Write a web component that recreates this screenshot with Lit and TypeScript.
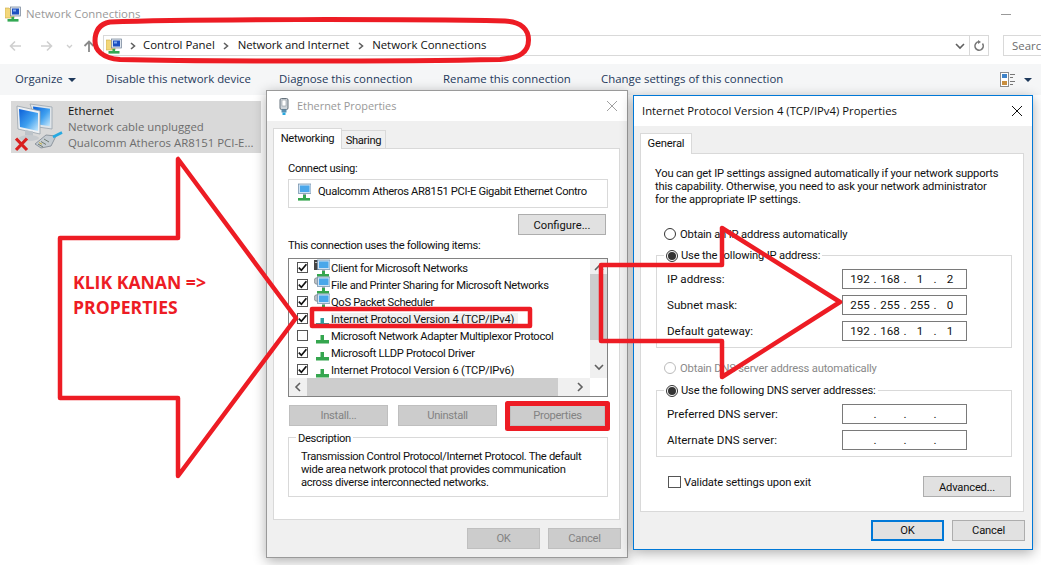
import { LitElement, html, css, svg } from "lit";
import { customElement } from "lit/decorators.js";

const netIcon = () => html`<svg class="ic16" viewBox="0 0 16 16" width="16" height="16">
  <path d="M0 2h4l1 1h4v9H0z" fill="#f3d77a" stroke="#c9a94a" stroke-width=".6"/>
  <rect x="5.5" y="1" width="10" height="9" fill="#dfe6ee" stroke="#6f7f93" stroke-width=".7"/>
  <rect x="7" y="2.5" width="7" height="6" fill="#1c4fc0"/>
  <rect x="8" y="3.5" width="3" height="2" fill="#7fa8ef"/>
  <rect x="6.5" y="11" width="2.6" height="2" fill="#33a853"/>
  <rect x="2.5" y="13" width="11" height="2.6" fill="#33a853"/>
</svg>`;

const pcIcon = (extra: string) => html`<svg class="ic16" viewBox="0 0 16 18" width="16" height="18">
  ${extra === "srv" ? svg`<rect x="0" y="1" width="5" height="10" fill="#444"/><rect x="1" y="3" width="3" height="1" fill="#bbb"/>` : ""}
  ${extra === "gear" ? svg`<circle cx="3.5" cy="5" r="3.4" fill="#b9bec3" stroke="#80868b" stroke-width=".7"/>` : ""}
  <rect x="3.5" y="1" width="12.5" height="9.5" fill="#cfe3f5" stroke="#6d8aa5" stroke-width=".7"/>
  <rect x="5" y="2.5" width="9.5" height="6.5" fill="#4aa7ea"/>
  <rect x="8" y="10.5" width="3" height="2" fill="#9aa5ad"/>
  <rect x="8" y="12" width="3" height="3" fill="#35a64f"/>
  <rect x="3" y="15" width="12" height="2.6" fill="#35a64f"/>
</svg>`;

const protoIcon = (c = "#35a64f") => html`<svg class="ic16" viewBox="0 0 16 18" width="16" height="18">
  <rect x="6.5" y="8" width="3.5" height="5" fill="${c}"/>
  <rect x="2" y="13" width="13" height="3.5" fill="${c}"/>
</svg>`;

const plugIcon = () => html`<svg viewBox="0 0 10 17" width="10" height="17">
  <rect x="1" y="0.5" width="8" height="11" rx="1.5" fill="#cfd5da" stroke="#66727c"/>
  <rect x="3" y="2" width="4" height="6" fill="#fff" stroke="#8a949c" stroke-width=".6"/>
  <rect x="2.5" y="11.5" width="5" height="3" fill="#5a8fb0"/>
  <rect x="3.5" y="14.5" width="3" height="2.5" fill="#27a9e1"/>
</svg>`;

const ethIcon = () => html`<svg class="bigic" viewBox="0 0 48 50" width="48" height="50">
  <defs>
    <linearGradient id="scr" x1="0" y1="0" x2="1" y2="1"><stop offset="0" stop-color="#0b5fd8"/><stop offset=".55" stop-color="#3fa0ef"/><stop offset="1" stop-color="#c9e9fc"/></linearGradient>
  </defs>
  <path d="M15 1l22 3v22l-14-2z" fill="#dfe5ea" stroke="#9aa4ae" stroke-width=".8"/>
  <path d="M18 3.500l17 2.300v17.500L20 21z" fill="url(#scr)"/>
  <path d="M2 3l23 5v23L3 26z" fill="#eef1f4" stroke="#98a2ab" stroke-width=".8"/>
  <path d="M4 6l19 4v18L5 24z" fill="url(#scr)"/>
  <path d="M10 27l8 1.500v5l-8-1.500z" fill="#bcc3c9"/>
  <ellipse cx="14" cy="35" rx="10" ry="3" fill="#c6cace"/>
  <path d="M20 41l11-9 10 1-5 10-10 2z" fill="#c4cbd1" stroke="#7d8790" stroke-width=".8"/>
  <path d="M23 41l5 3M26 38.500l5 3M29 36l5 3" stroke="#6f7b70" stroke-width="1"/>
  <path d="M24 39.500l3 1.800" stroke="#c9b23c" stroke-width="1"/>
  <path d="M38 34l9-4.500" stroke="#27a9e1" stroke-width="2.600"/>
  <path d="M1 35.500l11 11.500M12 35.500L1 47" stroke="#d9201f" stroke-width="3.200"/>
</svg>`;

const chk = (on: boolean) => html`<span class="cb">${on
  ? html`<svg viewBox="0 0 11 11" width="11" height="11"><path d="M1.800 5.600l2.600 2.700 5-6" fill="none" stroke="#111" stroke-width="1.700"/></svg>`
  : ""}</span>`;

const tri = (d: string) => html`<svg viewBox="0 0 10 10" width="10" height="10"><path d="${d}" fill="none" stroke="#606060" stroke-width="1.600"/></svg>`;

const ip = (parts: string[]) => html`<div class="ip">
  ${parts.map((p, i) => html`<span class="oct">${p}</span>${i < 3 ? html`<span class="dot">.</span>` : ""}`)}
</div>`;

const closeX = (c: string) => html`<svg viewBox="0 0 12 12" width="12" height="12"><path d="M1 1l10 10M11 1L1 11" stroke="${c}" stroke-width="1"/></svg>`;

@customElement("app-root")
export class AppRoot extends LitElement {
  static styles = css`
    :host { display: block; position: relative; width: 1041px; height: 565px; overflow: hidden; background: #fff;
      font-family: "Open Sans", "Noto Sans", sans-serif; font-size: 11.4px; color: #111; }
    * { box-sizing: border-box; }
    svg { display: block; flex: none; }
    .up { padding-bottom: 2px; }

    .explorer { display: flex; flex-direction: column; width: 1041px; height: 565px; }
    .titlebar { height: 28px; display: flex; align-items: center; gap: 5px; padding: 0 30px 0 5px; color: #999; }
    .min { margin-left: auto; width: 10px; height: 1px; background: #999; }
    .navrow { margin-top: 7px; height: 21px; display: flex; }
    .navbtns { width: 103px; flex: none; }
    .addr { width: 867px; flex: none; border: 1px solid #d9d9d9; display: flex; align-items: center; padding-left: 2px; }
    .chev { width: 23px; flex: none; display: flex; justify-content: center; }
    .chev.first { width: 21px; }
    .nai { letter-spacing: -.15px; }
    .ddn { margin-left: auto; margin-right: 4px; }
    .refresh { width: 19px; flex: none; border: 1px solid #d9d9d9; border-left: 0; display: flex; align-items: center; justify-content: center; }
    .search { margin-left: 14px; width: 60px; flex: none; border: 1px solid #d9d9d9; color: #6d6d6d; padding: 2px 0 0 8px; white-space: nowrap; overflow: hidden; }
    .toolbar { margin-top: 8px; height: 31px; background: #f5f6f7; display: flex; align-items: center; color: #1e395b; }
    .toolbar span { white-space: nowrap; }
    .tool-org { margin-left: 15px; width: 91px; display: flex; gap: 5px; align-items: center; flex: none; }
    .t-dis { width: 173px; flex: none; }
    .t-dia { width: 164px; flex: none; }
    .t-ren { width: 158px; flex: none; }
    .t-chg { flex: none; }
    .views { margin-left: auto; margin-right: 9px; display: flex; align-items: center; gap: 8px; }
    .caret { width: 0; height: 0; border-left: 4px solid transparent; border-right: 4px solid transparent; border-top: 4px solid #1e395b; }
    .tile { margin: 6px 0 0 11px; width: 250px; height: 52px; background: #d9d9d9; display: flex; color: #6d6d6d; }
    .bigic { margin: 2px 0 0 4px; }
    .tile-txt { margin-left: 5px; padding-top: 2px; line-height: 16px; white-space: nowrap; }
    .tile-txt b { font-weight: 400; color: #111; display: block; }
    .tile-txt span { display: block; }

    .win { position: absolute; display: flex; flex-direction: column; background: #f0f0f0; box-shadow: 0 3px 12px rgba(0,0,0,.32); }
    .w1 { left: 266px; top: 90px; width: 362px; height: 468px; border: 1px solid #9a9a9a; }
    .w2 { left: 633px; top: 95px; width: 400px; height: 455px; border: 1px solid #0078d7; }
    .wt { height: 30px; flex: none; background: #fff; display: flex; align-items: center; font-family: "Open Sans", sans-serif; }
    .w1 .wt { padding: 0 9px 0 12px; color: #999; gap: 8px; font-size: 10.9px; }
    .w2 .wt { padding: 0 9px 0 8px; font-size: 11.3px; }
    .wx { margin-left: auto; }
    .w1, .w2 { font-family: Roboto, sans-serif; font-size: 11.2px; }
    .w1 { letter-spacing: -.34px; }
    .w2 { letter-spacing: -.17px; }
    .wt { letter-spacing: 0; }
    .tabs { display: flex; align-items: flex-end; padding: 7px 0 0 6px; height: 27px; flex: none; }
    .tab { height: 18px; border: 1px solid #d9d9d9; border-bottom: 0; display: flex; align-items: center; justify-content: center; }
    .tab.on { height: 21px; background: #fff; margin-bottom: -1px; position: relative; z-index: 1; padding-bottom: 1px; }
    .tn { width: 69px; }
    .ts { width: 45px; margin-left: -1px; padding-top: 2px; }
    .tg { width: 52px; }
    .panel { margin-left: 6px; background: #fff; border: 1px solid #d9d9d9; display: flex; flex-direction: column; flex: none; }
    .w1 .panel { width: 347px; height: 372px; padding: 12px 11px 0 14px; }
    .w2 .panel { width: 384px; height: 359px; padding: 13px 0 0 14px; }
    .lbl { height: 14px; line-height: 16px; white-space: nowrap; }
    .adapter { margin-top: 4px; height: 29px; width: 320px; border: 1px solid #d9d9d9; display: flex; align-items: center; padding: 0 0 3px 6px; gap: 7px; white-space: nowrap; overflow: hidden; }
    .btn { height: 21px; display: flex; align-items: center; justify-content: center; background: #e1e1e1; border: 1px solid #adadad; flex: none; letter-spacing: -.2px; }
    .btn.off { background: #ccc; border-color: #bfbfbf; color: #838383; letter-spacing: -.3px; }
    .cfg { margin: 6px 0 0 230px; width: 88px; letter-spacing: 0; padding-top: 2px; }
    .list { margin-top: 6px; width: 320px; height: 139px; border: 1px solid #828282; display: grid; grid-template-columns: 301px 17px; grid-template-rows: 119px 18px; }
    .rows { overflow: hidden; }
    .row { height: 17px; display: flex; align-items: center; padding-left: 8px; white-space: nowrap; }
    .row .cb { margin-right: 6px; }
    .row .name { margin-left: 1px; height: 13px; line-height: 13px; margin-top: 1px; }
    .row .name.wide { letter-spacing: -.19px; }
    .row.sel .name { background: #f0f0f0; padding-right: 4px; }
    .cb { width: 11px; height: 11px; border: 1px solid #555; flex: none; display: block; position: relative; }
    .cb svg { margin: -1px 0 0 -1px; }
    .vbar { background: #f0f0f0; display: flex; flex-direction: column; align-items: center; padding-top: 4px; }
    .vthumb { margin-top: 1px; width: 17px; height: 66px; background: #cdcdcd; }
    .varr2 { margin-top: 22px; }
    .hbar { background: #f0f0f0; display: flex; align-items: center; padding-left: 4px; }
    .hthumb { margin-left: 4px; width: 251px; height: 18px; background: #cdcdcd; }
    .harr2 { margin-left: 17px; }
    .btns { margin-top: 8px; display: flex; gap: 10px; padding-left: 1px; }
    .b99 { width: 99px; }
    .bprop { width: 95px; margin-left: 3px; }
    .grp { position: relative; border: 1px solid #d9d9d9; }
    .desc { margin-top: 11px; width: 320px; height: 60px; padding: 12px 0 0 12px; line-height: 13px; white-space: nowrap; }
    .legend { position: absolute; left: 7px; top: -7px; background: #fff; padding: 0 2px; line-height: 14px; white-space: nowrap; display: flex; align-items: center; gap: 3px; }
    .desc .legend { top: -6px; }
    .foot { display: flex; justify-content: flex-end; gap: 8px; }
    .w1 .foot { padding: 8px 6px 0 0; }
    .w2 .foot { padding: 8px 7px 0 0; }
    .b73 { width: 73px; }
    .prim { border: 2px solid #0078d7; }
    .para { line-height: 13px; white-space: nowrap; }
    .radio { width: 12px; height: 12px; border-radius: 50%; border: 1px solid #333; background: #fff; flex: none; display: flex; align-items: center; justify-content: center; }
    .radio.on::after { content: ""; width: 8px; height: 8px; background: #333; border-radius: 50%; }
    .radio.dim { border-color: #bbb; }
    .rrow { height: 16px; display: flex; align-items: center; gap: 4px; margin-left: 9px; white-space: nowrap; }
    .rrow.dim { color: #8a8a8a; }
    .r1 { margin-top: 20px; }
    .r2 { margin-top: 12px; }
    .g1, .g2 { margin-left: 1px; width: 356px; padding: 13px 0 0 10px; display: flex; flex-direction: column; gap: 6px; }
    .g1 { margin-top: 13px; height: 93px; }
    .g2 { margin-top: 14px; height: 67px; }
    .frow { display: flex; align-items: center; height: 20px; white-space: nowrap; }
    .flabel { width: 175px; flex: none; font-size: 11.6px; letter-spacing: 0; }
    .ip { width: 125px; height: 20px; border: 1px solid #7a7a7a; display: flex; align-items: center; padding-left: 3px; flex: none; letter-spacing: 0; font-size: 11.6px; }
    .oct { width: 28px; text-align: center; flex: none; }
    .dot { width: 2px; display: flex; justify-content: center; flex: none; }
    .bottom { margin: 19px 0 0 13px; width: 343px; display: flex; justify-content: space-between; align-items: flex-start; }
    .val { display: flex; align-items: center; gap: 3px; height: 12px; white-space: nowrap; }
    .val .cb { width: 13px; height: 12px; }
    .adv { width: 88px; padding-top: 2px; }

    .marks { position: absolute; left: 0; top: 0; }
    .note { position: absolute; left: 73px; top: 270px; color: #ed1c24; font-family: "Open Sans", sans-serif; font-weight: 700; font-size: 17.6px; line-height: 25px; white-space: nowrap; }
  `;

  render() {
    const items: [boolean, unknown, string, boolean][] = [
      [true, pcIcon("srv"), "Client for Microsoft Networks", false],
      [true, pcIcon("gear"), "File and Printer Sharing for Microsoft Networks", false],
      [true, pcIcon("gear"), "QoS Packet Scheduler", false],
      [true, protoIcon("#2e9fa0"), "Internet Protocol Version 4 (TCP/IPv4)", true],
      [false, protoIcon(), "Microsoft Network Adapter Multiplexor Protocol", false],
      [true, protoIcon(), "Microsoft LLDP Protocol Driver", false],
      [true, protoIcon(), "Internet Protocol Version 6 (TCP/IPv6)", false],
    ];
    return html`
      <div class="explorer">
        <div class="titlebar">${netIcon()}<span class="up">Network Connections</span><span class="min"></span></div>
        <div class="navrow">
          <div class="navbtns">
            <svg viewBox="0 0 103 21" width="103" height="21">
              <path d="M21 11H11M15 6.500L10.500 11l4.500 4.500" fill="none" stroke="#cfcfcf" stroke-width="1.600"/>
              <path d="M41 11h10M47 6.500l4.500 4.500-4.500 4.500" fill="none" stroke="#cfcfcf" stroke-width="1.600"/>
              <path d="M67 10l2.500 2.500L72 10" fill="none" stroke="#cfcfcf" stroke-width="1.300"/>
              <path d="M89 17V6.500M84.500 11L89 6.500l4.500 4.500" fill="none" stroke="#8a8a8a" stroke-width="1.800"/>
            </svg>
          </div>
          <div class="addr">
            ${netIcon()}
            <span class="chev first">${tri("M3 2l3.500 3-3.500 3")}</span><span class="up">Control Panel</span>
            <span class="chev">${tri("M3 2l3.500 3-3.500 3")}</span><span class="up nai">Network and Internet</span>
            <span class="chev">${tri("M3 2l3.500 3-3.500 3")}</span><span class="up">Network Connections</span>
            <span class="ddn">${tri("M1 3l4 4 4-4")}</span>
          </div>
          <div class="refresh"><svg viewBox="0 0 12 12" width="12" height="12"><path d="M9.500 3.500A4.200 4.200 0 1 1 6 1.800" fill="none" stroke="#777" stroke-width="1.500"/><path d="M5 0l3 2-3 2z" fill="#777"/></svg></div>
          <div class="search">Search</div>
        </div>
        <div class="toolbar">
          <div class="tool-org"><span class="up">Organize</span><i class="caret"></i></div>
          <span class="t-dis up">Disable this network device</span>
          <span class="t-dia up">Diagnose this connection</span>
          <span class="t-ren up">Rename this connection</span>
          <span class="t-chg up">Change settings of this connection</span>
          <div class="views">
            <svg viewBox="0 0 16 15" width="16" height="15"><rect x=".5" y=".5" width="8" height="14" fill="#fff" stroke="#8d8d8d"/><rect x="2" y="2" width="5" height="4" fill="#3f83c9"/><rect x="2" y="9" width="5" height="4" fill="#c98f3f"/><path d="M10 2.500h5M10 5.500h3M10 9.500h5M10 12.500h3" stroke="#777"/></svg>
            <i class="caret"></i>
          </div>
        </div>
        <div class="tile">
          ${ethIcon()}
          <div class="tile-txt"><b>Ethernet</b><span>Network cable unplugged</span><span>Qualcomm Atheros AR8151 PCI-E...</span></div>
        </div>
      </div>

      <div class="win w1">
        <div class="wt">${plugIcon()}<span class="up">Ethernet Properties</span><span class="wx">${closeX("#a0a0a0")}</span></div>
        <div class="tabs"><div class="tab on tn">Networking</div><div class="tab ts">Sharing</div></div>
        <div class="panel">
          <div class="lbl">Connect using:</div>
          <div class="adapter">${pcIcon("")}<span class="up">Qualcomm Atheros AR8151 PCI-E Gigabit Ethernet Contro</span></div>
          <div class="btn cfg">Configure...</div>
          <div class="lbl" style="margin-top:3px">This connection uses the following items:</div>
          <div class="list">
            <div class="rows">
              ${items.map(([on, ic, name, sel]) => html`<div class="row ${sel ? "sel" : ""}">${chk(on)}${ic}<span class="name ${name.startsWith("Internet") ? "wide" : ""}">${name}</span></div>`)}
            </div>
            <div class="vbar">
              ${tri("M1 7l4-4 4 4")}
              <div class="vthumb"></div>
              <div class="varr2">${tri("M1 3l4 4 4-4")}</div>
            </div>
            <div class="hbar">
              ${tri("M7 1L3 5l4 4")}
              <div class="hthumb"></div>
              <div class="harr2">${tri("M3 1l4 4-4 4")}</div>
            </div>
            <div></div>
          </div>
          <div class="btns">
            <div class="btn off b99">Install...</div>
            <div class="btn off b99">Uninstall</div>
            <div class="btn off bprop">Properties</div>
          </div>
          <div class="grp desc">
            <span class="legend">Description</span>
            Transmission Control Protocol/Internet Protocol. The default<br/>
            wide area network protocol that provides communication<br/>
            across diverse interconnected networks.
          </div>
        </div>
        <div class="foot"><div class="btn off b73">OK</div><div class="btn off b73">Cancel</div></div>
      </div>

      <div class="win w2">
        <div class="wt"><span class="up">Internet Protocol Version 4 (TCP/IPv4) Properties</span><span class="wx">${closeX("#111")}</span></div>
        <div class="tabs"><div class="tab on tg">General</div></div>
        <div class="panel">
          <div class="para">You can get IP settings assigned automatically if your network supports<br/>this capability. Otherwise, you need to ask your network administrator<br/>for the appropriate IP settings.</div>
          <div class="rrow r1"><span class="radio"></span>Obtain an IP address automatically</div>
          <div class="grp g1">
            <span class="legend"><span class="radio on"></span>Use the following IP address:</span>
            <div class="frow"><span class="flabel">IP address:</span>${ip(["192", "168", "1", "2"])}</div>
            <div class="frow"><span class="flabel">Subnet mask:</span>${ip(["255", "255", "255", "0"])}</div>
            <div class="frow"><span class="flabel">Default gateway:</span>${ip(["192", "168", "1", "1"])}</div>
          </div>
          <div class="rrow r2 dim"><span class="radio dim"></span>Obtain DNS server address automatically</div>
          <div class="grp g2">
            <span class="legend"><span class="radio on"></span>Use the following DNS server addresses:</span>
            <div class="frow"><span class="flabel">Preferred DNS server:</span>${ip(["", "", "", ""])}</div>
            <div class="frow"><span class="flabel">Alternate DNS server:</span>${ip(["", "", "", ""])}</div>
          </div>
          <div class="bottom">
            <div class="val">${chk(false)}<span>Validate settings upon exit</span></div>
            <div class="btn adv">Advanced...</div>
          </div>
        </div>
        <div class="foot"><div class="btn b73 prim">OK</div><div class="btn b73">Cancel</div></div>
      </div>

      <svg class="marks" width="1041" height="565" viewBox="0 0 1041 565" fill="none" stroke="#ed1c24" stroke-width="4.500" stroke-linejoin="round">
        <path d="M110 22C190 19 400 19 505 21C522 22 528.500 30 528.500 40C528.500 52 520 58 500 59.500C400 61.500 200 61.500 120 59.500C102 58 95 50 95 41C95 31 100 24 110 22Z" stroke-width="5"/>
        <path d="M178 159V238H60V398H178V476L296 318Z"/>
        <path d="M722 228V265H601V341H722V377L840 302Z"/>
        <rect x="312" y="309" width="218" height="17" stroke-width="4.500"/>
        <rect x="507.500" y="403.500" width="100" height="25" stroke-width="5"/>
      </svg>
      <div class="note">KLIK KANAN =&gt;<br/>PROPERTIES</div>
    `;
  }
}
